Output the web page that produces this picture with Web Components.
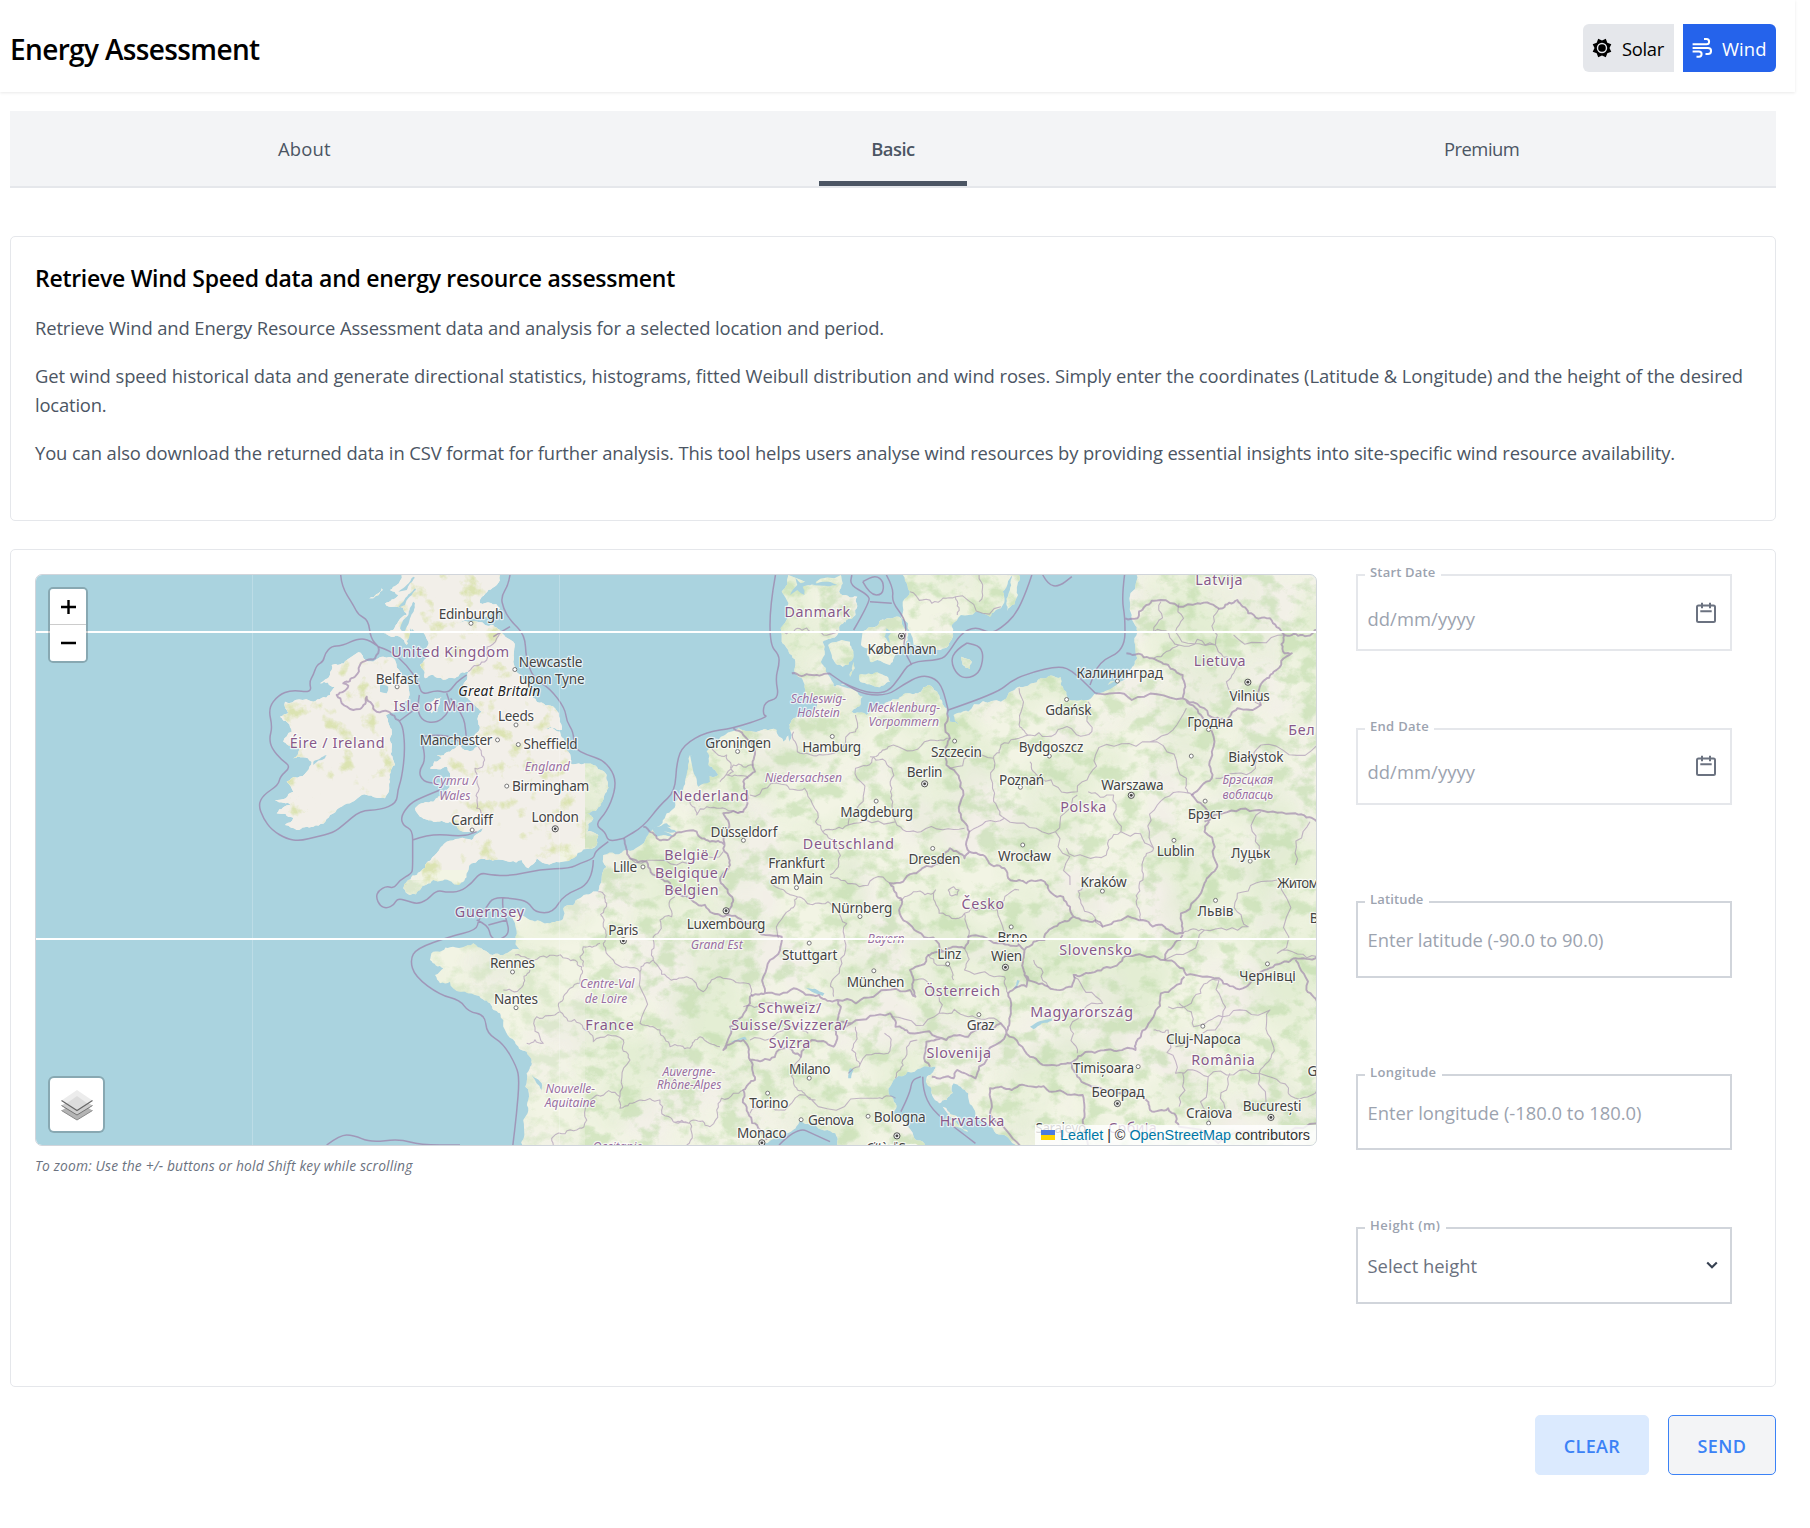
<!DOCTYPE html>
<html lang="en">
<head>
<meta charset="utf-8">
<title>Energy Assessment</title>
<style>
html,body{margin:0;background:#fff}
body{font-family:"Open Sans","Noto Sans",sans-serif;font-size:18.4px;line-height:28.8px;color:#000;height:1528px;overflow:hidden}
</style>
</head>
<body>
<energy-app></energy-app>
<script>
const make = (name, html, setup) => customElements.define(name, class extends HTMLElement {
  connectedCallback() {
    if (this.shadowRoot) return;
    this.attachShadow({ mode: 'open' }).innerHTML = html;
    if (setup) setup.call(this, this.shadowRoot);
  }
});

make('energy-app', `
<style>
:host{display:block;width:1810px}
main{display:flex;flex-direction:column;padding:19px 34px 0 10px}
.intro{margin-top:48px}
.work{margin-top:28px}
.intro h2{margin:0;font-size:23px;line-height:34px;font-weight:600}
.intro p{margin:0 0 19.2px;color:#4b5563;white-space:nowrap}
.intro h2 + p{margin-top:19px}
.cols{display:grid;grid-template-columns:1282px 376px;column-gap:39px}
.hint{display:block;font-size:13.8px;line-height:20px;font-style:italic;color:#6b7280;margin-top:9.5px}
.fields{display:flex;flex-direction:column}
.fields > :nth-child(2){margin-top:77px}
.fields > :nth-child(3){margin-top:96px}
.fields > :nth-child(4){margin-top:96px}
.fields > :nth-child(5){margin-top:77px}
.actions{display:flex;justify-content:flex-end;gap:19px;margin-top:28px}
</style>
<app-header></app-header>
<main>
  <tab-bar></tab-bar>
  <panel-card class="intro" style="--card-h:285px">
    <h2><fit-line w="640">Retrieve Wind Speed data and energy resource assessment</fit-line></h2>
    <p><fit-line w="849">Retrieve Wind and Energy Resource Assessment data and analysis for a selected location and period.</fit-line></p>
    <p><fit-line w="1708">Get wind speed historical data and generate directional statistics, histograms, fitted Weibull distribution and wind roses. Simply enter the coordinates (Latitude &amp; Longitude) and the height of the desired</fit-line><br><fit-line w="71.5">location.</fit-line></p>
    <p><fit-line w="1640">You can also download the returned data in CSV format for further analysis. This tool helps users analyse wind resources by providing essential insights into site-specific wind resource availability.</fit-line></p>
  </panel-card>
  <panel-card class="work" style="--card-h:838px">
    <div class="cols">
      <div><map-view></map-view><span class="hint"><fit-line w="377.5">To zoom: Use the +/- buttons or hold Shift key while scrolling</fit-line></span></div>
      <div class="fields">
        <form-field kind="date" style="--line:#e5e7eb;--drop:15px;--lift:2px"><fit-line slot="label" w="65.5">Start Date</fit-line><fit-line w="107.5">dd/mm/yyyy</fit-line></form-field>
        <form-field kind="date" style="--line:#e5e7eb;--drop:12px"><fit-line slot="label" w="59">End Date</fit-line><fit-line w="107.5">dd/mm/yyyy</fit-line></form-field>
        <form-field style="--drop:2px"><fit-line slot="label" w="53.5">Latitude</fit-line><fit-line w="236">Enter latitude (-90.0 to 90.0)</fit-line></form-field>
        <form-field style="--field-h:76px;--drop:2px"><fit-line slot="label" w="66.5">Longitude</fit-line><fit-line w="274">Enter longitude (-180.0 to 180.0)</fit-line></form-field>
        <form-field kind="select" style="--ink:#6b7280;--drop:2px"><fit-line slot="label" w="70.5">Height (m)</fit-line><fit-line w="109.5">Select height</fit-line></form-field>
      </div>
    </div>
  </panel-card>
  <div class="actions">
    <action-button style="--w:114px;--bg:#dbeafe;--bd:#dbeafe"><fit-line w="56.5">CLEAR</fit-line></action-button>
    <action-button style="--w:108px;--bg:#f3f4f6;--bd:#3b82f6"><fit-line w="49">SEND</fit-line></action-button>
  </div>
</main>`);

make('app-header', `
<style>
:host{display:flex;box-sizing:border-box;width:1795px;height:92px;padding:4px 19px 0 10px;justify-content:space-between;align-items:center;box-shadow:0 1px 3px rgba(0,0,0,.09)}
h1{margin:0;padding-top:1px;font-size:28px;line-height:40px;font-weight:600}
.modes{display:flex;gap:9px}
</style>
<h1><fit-line w="249.5">Energy Assessment</fit-line></h1>
<div class="modes">
<mode-button style="--w:91px;--bg:#e5e7eb;--fg:#000;--r:6px 0 0 6px">
<svg slot="icon" width="20" height="20" viewBox="0 0 20 20"><path fill="currentColor" fill-rule="evenodd" d="M6.200.7 10 2.500 13.800.7 15.300 4.700 19.300 6.200 17.500 10 19.300 13.800 15.300 15.300 13.800 19.300 10 17.500 6.200 19.300 4.700 15.300.7 13.800 2.500 10 .7 6.200 4.700 4.700ZM10 4.800a5.200 5.200 0 1 0 0 10.400 5.200 5.200 0 0 0 0-10.400Z"/><circle cx="10" cy="10" r="3.800" fill="currentColor"/></svg>
<fit-line w="42">Solar</fit-line></mode-button>
<mode-button style="--w:93px;--bg:#2563eb;--fg:#fff;--r:0 6px 6px 0">
<svg slot="icon" width="20" height="20" viewBox="0 0 20 20" fill="none" stroke="currentColor" stroke-width="2"><path d="M.6 6.300H14.500a2.600 2.600 0 0 0 0-5.200H12M.6 9.900H16a3 3 0 0 1 0 6.100H13.500M.6 13.500H7a2.600 2.600 0 0 1 0 5.200H4.500"/></svg>
<fit-line w="44.5">Wind</fit-line></mode-button>
</div>`);

make('mode-button', `
<style>
:host{display:flex;box-sizing:border-box;width:var(--w);height:48px;padding:0 0 0 9px;align-items:center;gap:10px;background:var(--bg);color:var(--fg);border-radius:var(--r)}
span{padding-top:3px}
slot[name=icon]{display:flex}
</style><slot name="icon"></slot><span><slot></slot></span>`);

make('tab-bar', `
<style>
:host{display:flex;box-sizing:border-box;height:77px;background:#f3f4f6;border-bottom:2px solid #e5e7eb;color:#4b5563}
div{flex:1;display:flex;justify-content:center;align-items:stretch}
span{display:flex;box-sizing:border-box;justify-content:center;width:148px;padding-top:24px;height:75px}
.on span{border-bottom:5px solid #4b5563;font-weight:600}
</style>
<div><span><fit-line w="52.5">About</fit-line></span></div>
<div class="on"><span><fit-line w="43.5">Basic</fit-line></span></div>
<div><span><fit-line w="75.5">Premium</fit-line></span></div>`);

make('panel-card', `
<style>:host{display:block;box-sizing:border-box;height:var(--card-h);padding:24px;border:1px solid #e5e7eb;border-radius:5px}</style><slot></slot>`);

make('form-field', `
<style>
:host{display:block;box-sizing:border-box;height:var(--field-h,77px)}
fieldset{box-sizing:border-box;height:calc(100% + 8px);margin:-8px 0 0;padding:0 12px 0 9.5px;border:2px solid var(--line,#d1d5db);min-width:0}
legend{padding:0 5px;margin-left:-2.5px;font-size:13px;line-height:12px;height:18px;font-weight:600;color:#9ca3af}
.row{display:flex;justify-content:space-between;height:56px;align-items:center;color:var(--ink,#9ca3af)}
.val{padding-top:var(--drop)}
.ico{display:flex;padding-top:var(--lift,0px)}
</style>
<fieldset><legend><slot name="label"></slot></legend><div class="row"><span class="val"><slot></slot></span><span class="ico"></span></div></fieldset>`,
function (root) {
  const kind = this.getAttribute('kind'), ico = root.querySelector('.ico');
  if (kind === 'date') ico.innerHTML = '<svg width="23" height="22" viewBox="0 0 23 22" fill="none" stroke="#6b7280" stroke-width="2"><rect x="2" y="3.5" width="18" height="16.500" rx="1.5"/><path d="M7 .8v5.4M15 .8v5.4M5.3 9.2h11.4"/></svg>';
  if (kind === 'select') ico.innerHTML = '<svg width="12" height="10" viewBox="0 0 12 10" fill="none" stroke="#374151" stroke-width="2.1"><path d="M1.2 2.4 6 7.2 10.8 2.4"/></svg>';
});

make('action-button', `
<style>:host{display:flex;box-sizing:border-box;justify-content:center;align-items:center;width:var(--w);height:60px;padding-top:3px;background:var(--bg);border:1px solid var(--bd);border-radius:5px;color:#3b82f6;font-weight:600;font-size:18px}</style><slot></slot>`);

/* Sheets: origin x, origin y, units per pixel in x and y. */
const SHEETS = { A:[30,565,3,3], B:[400,565,3,3], C:[750,565,2.75,3], D:[30,860,3,3], E:[400,860,3,3], F:[750,860,2.75,3] };
function pts(text) {
  let s = SHEETS.A; const out = [];
  for (const t of text.trim().split(/\s+/)) {
    if (SHEETS[t]) { s = SHEETS[t]; continue; }
    const [x, y] = t.split(',').map(Number);
    out.push([s[0] + x / s[2], s[1] + y / s[3]]);
  }
  return out;
}
let seed = 7;
const rnd = () => (seed = (seed * 16807) % 2147483647) / 2147483647 - .5;
function rough(p, amp) {
  for (let k = 0; k < 3; k++) {
    const o = [p[0]];
    for (let i = 1; i < p.length; i++) {
      const [a, b] = p[i - 1], [c, d] = p[i], l = Math.hypot(c - a, d - b);
      if (l > 3.5 && l < 130) { const j = rnd() * amp * l; o.push([(a + c) / 2 - (d - b) / l * j, (b + d) / 2 + (c - a) / l * j]); }
      o.push(p[i]);
    }
    p = o;
  }
  return p;
}
const line = p => 'M' + p.map(q => q[0].toFixed(1) + ' ' + q[1].toFixed(1)).join('L');
function smooth(p) {
  let d = 'M' + p[0];
  for (let i = 1; i < p.length - 1; i++) d += 'Q' + p[i] + ' ' + (p[i][0] + p[i + 1][0]) / 2 + ' ' + (p[i][1] + p[i + 1][1]) / 2;
  return d + 'L' + p[p.length - 1];
}
const LAND = [
'A 985,262 1000,280 1030,290 1060,275 1095,285 1115,330 1135,360 1135,400 1100,440 1068,450 1085,500 1085,560 1095,600 1080,650 1065,700 1010,690 960,715 900,750 850,785 800,795 765,780 790,758 740,745 785,722 735,705 790,680 770,650 830,620 845,590 790,580 810,550 760,530 785,500 750,455 775,445 765,410 850,410 900,390 915,365 870,355 900,330 905,300 950,285',
'A 1115,30 1100,60 1080,75 1105,90 1065,115 1090,125 1120,130 1130,150 1090,195 1060,205 1085,215 1110,215 1130,240 1145,190 1170,200 1195,230 1195,270 1170,300 1185,340 B 100,330 130,345 165,340 205,320 195,350 190,385 225,420 245,440 235,470 235,500 210,520 235,545 200,555 180,540 150,560 110,570 125,580 90,610 140,605 150,625 150,660 140,690 100,710 45,730 60,755 100,770 150,770 190,800 225,800 250,790 215,825 140,830 110,865 60,920 20,950 E 10,85 30,105 60,90 100,60 155,65 175,75 200,40 215,10 B 260,885 330,890 365,885 385,910 410,880 490,890 520,880 590,840 595,810 560,800 580,760 545,745 590,735 620,680 620,630 580,600 510,595 505,560 480,500 430,490 485,495 465,430 410,410 380,350 340,290 340,230 300,195 255,180 175,175 240,160 300,130 240,115 245,95 290,60 300,30',
'E 365,870 370,780 385,720 380,640 395,600 380,575 345,545 310,480 300,460 270,430 225,405 150,365 120,370 105,345 130,325 90,300 100,275 150,262 220,250 250,270 310,285 360,270 345,190 320,150 375,170 390,180 450,190 490,175 490,145 540,115 595,95 605,60 B 605,940 610,870 680,855 740,815 760,790 800,745 835,700 855,650 870,570 885,575 890,620 910,640 955,630 945,615 925,600 920,560 935,540 975,510 1060,500 1130,495 1150,530 1170,500 1180,460 1230,450 1255,400 1215,380 1190,330 1175,270 1145,230 1145,80 1165,30 C 250,30 245,80 295,95 290,150 245,185 240,210 200,230 195,290 215,330 230,365 270,360 310,395 280,440 320,450 380,410 430,385 470,380 490,360 520,390 540,430 550,470 575,480 560,450 600,440 690,410 740,365 800,340 855,337 870,380 880,405 930,405 970,380 1040,320 1065,280 1065,200 1050,150 1060,20 1600,20 F 1600,870 745,870 700,825 650,790 620,760 600,700 580,680 560,670 540,720 520,730 500,690 485,655 510,620 470,625 400,655 385,680 400,730 395,760 450,830 490,870 F 250,870 235,820 180,790 140,780 100,820 40,850 30,870',
'C 310,200 345,185 380,160 410,155 435,210 410,260 385,300 350,285 330,290 325,250 305,240','C 215,240 245,228 275,230 285,270 270,300 240,300 225,270','C 300,330 350,322 385,350 345,365 300,345','C 285,290 288,310 275,335 280,310',
'C 405,20 440,80 420,110 440,200 450,240 520,255 550,230 555,180 580,150 660,155 690,130 695,80 730,20','C 740,30 737,90 708,138 710,90 720,30','C 580,275 610,290 605,312 585,300','A 1195,420 1215,400 1235,395 1225,425 1205,445','A 1018,100 1055,70 1058,75 1030,100','F 535,770 580,800 600,815 560,795','F 530,740 560,765 590,780 550,770'
];
const SEA = ['B 870,570 905,565 925,600 930,650 895,665 880,620','F 395,870 395,850 420,860','E 385,630 425,670 425,700 405,660','F 770,500 830,475 830,482 780,508','F 150,380 205,400 200,408 170,395','E 985,545 1035,530 1040,540 1000,545','F 270,655 275,625 285,630 278,655','F 725,385 735,360 742,362 735,385','C 855,337 870,340 885,390 870,380',
'B 0,190 25,150 40,110 45,115 30,160 10,205','B -10,130 10,110 45,70 48,74 15,120','B -5,80 20,60 40,35 45,38 20,75','B 20,230 30,190 38,200 32,240','B 755,790 800,775 820,790 800,785 830,800 790,800 825,815 770,815','C 110,90 130,60 125,40 140,55 180,50 185,60 145,65 150,90 130,75','C 170,60 200,50 240,60 200,62','C 250,180 260,170 275,185 260,200','C 240,360 280,350 300,385 270,370','C 390,200 375,190 370,215 385,240 380,215','A 1050,360 1075,365 1070,385 1050,380','A 850,590 890,570 885,580 850,600','C 940,370 1000,350 1040,300 1035,340 960,385','C 100,480 115,510 108,530'];
const COASTAL = [
'A 1045,245 1020,225 985,220 935,243 905,243 885,265 880,290 860,300 850,330 838,350 845,383 785,375 745,390 715,430 727,485 718,520 725,550 755,585 783,605 750,635 745,660 700,690 685,720 700,760 725,795 770,822 810,828 860,815 910,803 940,780 990,737 1050,735 1100,715 1103,675 1115,640 1125,560 1120,490 1108,468',
'A 932,30 935,65 970,120 985,150 1015,165 1022,220 1045,245','A 1045,245 1080,255 1130,300 1165,350 1175,390 1220,375 1255,385 1280,350 1310,330','A 1168,390 1160,435 1180,470 1220,473 1250,450 1262,420 1250,385','A 1108,468 1165,425','A 1262,400 1300,450 1308,500 1310,540','A 1175,515 1240,505 1300,535','A 1175,530 1190,580 1165,620 1180,650 1215,655','A 1230,675 1180,695 1140,715 1112,755 1120,782 1148,795 1148,850 1148,910 D 1145,40 1110,60 1092,85 1070,78 1045,92 1038,112 1050,138 1070,145 1092,135 1102,115 1130,122 E 50,132 80,122 110,90 140,97 180,95 215,70 240,38 270,45 330,48 420,28 510,25 540,10 B 582,880 585,860 625,830','A 1148,825 1200,805 1300,815 1340,800',
'B 330,30 325,60 303,95 310,130 330,165 375,210 378,280 400,340 450,370 495,430 500,470 520,500 523,550 560,570 610,585 645,630 645,680 620,740 585,780 615,800 625,830 672,820','B 280,215 330,185',
'E 580,0 578,70 490,105 460,158 405,158 385,125 340,115 280,112 260,140 B 235,1065 E 230,210 150,230 50,265 30,300 45,350 120,405 180,420 205,455 255,465 260,520 310,550 350,620 358,660 350,760 338,860','E 230,180 265,195 272,235 300,240 328,220 320,180 308,150 308,112','E 265,195 320,180','D 890,855 930,825 970,825 1020,847 1110,837 1170,855 1290,855',
'C 775,30 760,80 730,150 690,190 660,205 620,185 580,205 545,265 525,285 440,290 410,340 380,380 340,385 300,375 250,350','C 285,195 330,110 325,90 275,60 280,30','C 310,50 330,90 365,90 368,50 345,30 310,50','C 375,30 395,70 390,110 425,160 430,200 420,250 445,300','C 330,110 390,115','C 597,234 565,255 552,290 570,330 597,341 630,325 642,280 635,245 597,234','C 1030,30 1022,100 1032,160 1030,255 960,290 935,360','C 545,435 680,385 720,345 780,320 840,305 880,310 950,385','C 805,30 820,60 850,65 885,35','C 225,330 270,365 320,390 380,390 420,360 470,330 510,340 530,370 545,435','C 70,30 55,120 55,240 80,270 80,300 70,340 80,400 40,410 35,450 B 1105,455 1000,490 920,500 850,540 830,590 825,680 780,720 730,785 670,820','F 415,755 440,700 445,660 470,650','F 475,650 475,690 500,750 560,800 620,850','F 80,855 130,800 180,825 220,845'];
const BORDERS = [
'A 1045,245 1035,280 990,300 975,335 940,355 955,362 920,390 935,415 970,435 990,432 1010,395 1040,440 1075,440 1108,468',
'B 1000,490 1030,510 1065,560 1065,620 1030,650 1045,700 1030,740 970,745 985,790 970,850 990,900 E 960,60 1000,120 985,165','B 730,785 770,820 810,820 850,800 890,800 930,830 975,840','B 672,820 690,880 740,890 780,940 E 830,95 880,125 940,160 985,165 1060,195 1145,230 1110,300 1095,400 1050,410 1050,430 990,500 970,570 1030,540 1050,600 1110,600 1130,575 F 100,560 140,590 170,540 230,560 235,510 280,490',
'F 40,400 120,385 190,405 240,420 340,410 440,390 455,410 450,360 440,330 490,285 530,275 460,215 410,150 415,115 385,70 450,40 500,20 C 550,850 590,880 603,860','F 240,420 250,440 240,490 280,490 385,460 400,500 440,520 540,540 600,530 690,490 705,520',
'C 545,435 550,520 540,600 575,640 575,740 603,800 603,860 650,880 700,910 710,940 F 740,60 760,70 800,60 830,100 880,140 890,170 950,180 970,200 1000,185 1080,180 1140,200 1190,220 1185,160 1250,70 1285,20 C 1285,900 1250,800 1260,740 1215,690 1270,640 1270,560 1240,450 1190,400 1050,405 950,385',
'F 530,275 590,265 600,230 680,250 740,255 755,270 780,245 810,240 850,190 890,170','C 1190,400 1190,330 1150,300 1100,280 1035,265','C 1032,160 1065,160 1085,125 1130,105 1230,115 1300,130 1340,105 1370,145 1430,160 1470,210 1470,265 1490,265 1440,320 1410,350 1405,420 1340,430 1310,470 1260,450 1190,400','C 1470,210 1520,210 1565,190','C 1250,770 1300,745 1400,735 1500,745 1560,770',
'F 755,270 750,300 755,345 820,380 885,380 890,345 930,340 1000,320 1060,285 1140,300 1150,270 1190,225','F 1140,300 1200,345 1290,355 1355,385 1400,340 1460,310 1500,295 1560,290','F 1500,300 1530,390 1560,440','F 1195,350 1130,400 1110,470 1075,530 1060,570 1000,572 930,575 880,610 830,615 770,590 705,520 715,470 710,400 760,380 755,345','F 705,520 630,620 620,655 570,630 560,655 500,650','F 540,540 485,545 495,620','F 745,860 660,760 660,685 720,690 780,680 830,695 915,705 915,780 930,860','F 885,610 900,650 940,680 1020,700 1080,710 1100,750 1150,745 1180,800 1400,815 1560,790','E 1050,600 1065,660 1030,690 1045,760 1080,810 1100,840','C 115,325 170,330 225,330'];
const REGIONS = [
'E 595,95 620,130 610,200 610,250 640,300 720,335 760,300 760,240 780,180 815,170 825,110','E 550,320 550,260 600,250','E 345,285 420,290 500,295 545,320 540,370 490,410 480,455 410,470 430,550 380,550','E 720,335 720,490 780,510 810,560 870,565 900,530 960,560','E 760,300 800,350 860,350 910,395 960,350 1040,370 1060,410','E 480,455 540,490 580,545 670,540 690,600 660,710 660,745 720,720 780,720 820,785 870,790 860,855','E 590,705 560,780 530,810 460,830 460,855','E 820,785 880,780 930,800 950,750 1000,700 1030,690','E 310,390 370,375 390,330','E 590,705 660,710',
'C 0,690 100,660 150,670 180,770 200,800 270,780 300,720 290,610 340,575 380,545 480,530 550,520','C 270,780 400,770 470,800 590,790','C 400,770 390,690 390,610 330,575','C 200,800 240,850 220,930','F 80,240 110,150 130,110 60,60','F 260,240 240,150 180,130 130,110','C 120,500 130,560 200,570 290,500 290,450','F 230,410 235,350 260,240','F 220,50 300,80 385,70','C 740,370 740,480 770,510 860,490 940,500 930,410','C 550,610 670,580 690,540 770,510','C 770,590 800,640 900,680 950,570 1100,530 1200,430','C 930,680 1000,690 1020,800 1110,850 1120,720 1220,690','C 670,580 670,700 700,760 840,800 900,690','C 603,800 700,760','C 840,800 880,960','C 1020,800 980,870 870,850','C 1100,530 1200,640 1215,690','C 1110,850 1080,890 1070,960','F 1070,75 1065,140 1075,180','F 970,200 910,130 920,60','C 440,80 500,115 565,95 690,125','C 565,95 570,150','C 630,110 630,30','C 90,200 130,190 180,200 240,195','B 205,320 260,285 290,220 310,200','B 235,545 250,600 225,610 235,680 230,730 260,770','B 930,540 980,570 1000,620 980,630 1045,640','B 870,710 890,750 960,730 1030,740','B 960,650 1000,600 1060,600','B 690,880 830,900 970,860','F 1110,510 1150,510 1170,640 1260,650 1400,640 1480,700','F 1150,440 1240,400 1290,360','F 1170,560 1300,470 1430,450 1440,560 1400,640','F 1180,740 1190,640','F 1320,640 1310,760','F 1260,650 1260,800','F 1400,640 1400,750','F 1180,430 1220,500 1300,470 1290,360','F 890,350 970,430 880,500 900,580','F 780,300 820,380','F 1140,300 1250,210 1370,200 1340,100 1450,60','F 1190,220 1250,210','F 1460,60 1450,280 1560,290','F 1480,700 1560,690','C 1130,110 1110,200 1180,240 1280,240 1290,130','C 1330,210 1470,210','C 1180,115 1170,200 1280,240 1340,290 1310,350 1405,420','C 1180,240 1110,280','C 1405,540 1560,540','C 1405,540 1390,610 1280,640','C 1405,740 1400,860','C 1540,770 1500,900','F 410,120 450,95 510,90 520,160 590,160 600,230','F 590,160 680,150 740,90','F 680,150 740,255','F 545,90 560,80 575,90 570,105 550,105 545,90','F 490,285 550,320 560,360','F 590,265 590,330 700,350 710,400','F 390,470 520,460 490,370 450,360','F 520,460 600,470 690,490','F 140,590 120,670 150,700 170,720 350,715 400,715','F 0,760 80,750 180,720','F 270,640 300,620 380,580 370,520','F 400,655 420,600 460,540','F 300,620 280,570 290,500','E 1030,440 1120,430 1260,430','F 0,540 100,500 160,520'];
/* text, x, y, width; the leading key picks the style: t town, c country, r region, i island */
const LABELS = `t|Edinburgh|408|532|56;c|United Kingdom|390|565|102;t|Newcastle|477|574|55;t|upon Tyne|478|588|57;t|Belfast|344|588|37;i|Great Britain|432.5|598.5|71;c|Isle of Man|376|612|70;t|Leeds|447|620|31;t|Manchester|395|641|63;t|Sheffield|477|645|47;c|Éire / Ireland|292|644|82;r|England|474|664|39;r|Cymru /|394|676|38;r|Wales|394|689|27;t|Birmingham|477|681|67;t|Cardiff|409|710.5|36;t|London|481|708|41;c|Guernsey|424|790.5|60;t|Rennes|444|834|39;t|Nantes|447|865.5|38;r|Centre-Val|526|852.5|47;r|de Loire|525|865|37;c|France|528|888|42;r|Nouvelle-|494|943|43;r|Aquitaine|494|955.5|44;r|Auvergne-|597|928|46;r|Rhône-Alpes|597|940|56;r|Occitanie|535|993.5|43;t|Paris|540|806|26;t|Lille|541.5|751|21;c|België /|599|740.5|47;c|Belgique /|599|756|63;c|Belgien|599|771.5|47;t|Luxembourg|629|800.5|68;r|Grand Est|621|818|45;c|Nederland|615.5|690|66;t|Groningen|639.5|643.5|57;t|Düsseldorf|644.5|720.5|58;t|Frankfurt|690|748|49;t|am Main|690|762|46;c|Deutschland|735|731|79;t|Hamburg|720.5|647.5|51;r|Niedersachsen|696|673.5|67;r|Schleswig-|709|605|48;r|Holstein|709|617.5|37;r|Mecklenburg-|783|613|63;r|Vorpommern|783|625.5|61;c|Danmark|708|530|57;t|København|781.5|562|60;t|Szczecin|828.5|652|44;t|Berlin|801|669|31;t|Magdeburg|759.5|703.5|63;t|Dresden|809.5|744.5|45;t|Nürnberg|746.5|786.5|53;t|Stuttgart|701.5|827.5|48;t|München|758.5|850.5|50;r|Bayern|767.5|813.5|32;t|Linz|822.5|827|21;t|Wien|872|828.5|27;t|Brno|877|812|26;c|Česko|851.5|783.5|37;c|Österreich|833.5|858.5|66;t|Graz|849.5|888|24;c|Schweiz/|684|873|55;c|Suisse/Svizzera/|684|888|101;c|Svizra|684|904|36;t|Milano|701.5|926|36;t|Torino|666|955.5|34;t|Genova|720|970|40;t|Bologna|779.5|967.5|45;t|Monaco|660|981.5|43;c|Slovenija|830.5|912.5|56;c|Hrvatska|842|971|56;c|Magyarország|937|876.5|89;c|Slovensko|949|823|63;t|Kraków|956|764.5|40;t|Wrocław|887.5|741.5|46;c|Polska|938.5|699|40;t|Warszawa|981|680.5|54;t|Poznań|885|675.5|39;t|Bydgoszcz|910.5|647.5|56;t|Gdańsk|925.5|615.5|40;t|Калининград|970|583.5|75;c|Lietuva|1056.5|573|45;t|Vilnius|1082.5|603|35;t|Гродна|1048.5|625.5|40;t|Białystok|1088|656|48;c|Бел|1127.5|632.5|23;r|Брэсцкая|1081|675.5|44;r|вобласць|1081|688.5|44;t|Брэст|1044|705|30;t|Lublin|1018.5|737.5|33;t|Луцьк|1083.5|739.5|34;t|Львів|1053|789.5|31;t|Житом|1124.5|765.5|36;t|Чернівці|1098|845.5|49;t|Cluj-Napoca|1042.5|900.5|65;c|România|1059.5|918.5|55;t|Timișoara|956|925|53;t|Београд|968.5|946|46;t|Craiova|1047.5|964.5|40;t|București|1102|958.5|51;c|Latvija|1056|502.5|41;t|Sarajevo|919|977|44;c|Србија|981|977.5|42;t|Città di San|773|995|45;t|G|1137|928|7;t|В|1138.5|795|7`;
const DOTS = '408,540 446,580 344,595 447,628 431,641 449,645 439,681 409,719 444,842 447,873 557,751 639,651 644,728 690,769 721,638 827,642 759,694 808,735 745,794 701,817 757,841 821,835 876,803 848,879 701,934 665,947 694,970 752,967 955,772 886,732 884,682 909,655 924,606 968,590 1047,632 1032,655 1044,694 1017,728 1083,746 1053,780 1098,835 1042,889 986,924 1047,973';
const CAPITALS = '481,718 540,815 629,789 781,551 801,679 871,838 660,990 777,984 980,689 1081,591 968,956 1101,968';

make('map-canvas', `
<style>
:host{display:block}
svg{display:block}
text{font-family:"Noto Sans","Open Sans",sans-serif;text-anchor:middle;paint-order:stroke;stroke:rgba(255,255,255,.7);stroke-width:2.4px;stroke-linejoin:round}
.t{font-size:13.6px;fill:#444}
.c{font-size:14.3px;fill:#87598a}
.r{font-size:12.2px;fill:#9a70a2;font-style:italic}
.i{font-size:13.8px;fill:#222;font-style:italic}
</style>
<svg width="1280" height="570" viewBox="36 575 1280 570">
<defs>
<clipPath id="land"><path class="landpath"/></clipPath>
<filter id="woods" x="0" y="0" width="100%" height="100%" color-interpolation-filters="sRGB"><feTurbulence type="fractalNoise" baseFrequency=".05 .06" numOctaves="6" seed="11"/><feColorMatrix values="0 0 0 0 .74  0 0 0 0 .86  0 0 0 0 .66  4.5 0 0 0 -2.1"/></filter>
<filter id="tint" x="0" y="0" width="100%" height="100%" color-interpolation-filters="sRGB"><feTurbulence type="fractalNoise" baseFrequency=".012" numOctaves="3" seed="31"/><feColorMatrix values="0 0 0 0 .84  0 0 0 0 .91  0 0 0 0 .77  0 3 0 0 -1.2"/></filter>
<filter id="fields" x="0" y="0" width="100%" height="100%" color-interpolation-filters="sRGB"><feTurbulence type="fractalNoise" baseFrequency=".014" numOctaves="3" seed="4"/><feColorMatrix values="0 0 0 0 .95  0 0 0 0 .935  0 0 0 0 .915  0 5 0 0 -2.2"/></filter>
<filter id="heath" x="0" y="0" width="100%" height="100%" color-interpolation-filters="sRGB"><feTurbulence type="fractalNoise" baseFrequency=".05" numOctaves="5" seed="23"/><feColorMatrix values="0 0 0 0 .86  0 0 0 0 .89  0 0 0 0 .7  5 0 0 0 -2.9"/></filter>
</defs>
<rect x="36" y="575" width="1280" height="570" fill="#aad3df"/>
<path class="landpath" fill="#f2f4e4"/>
<g clip-path="url(#land)">
<rect x="36" y="575" width="1280" height="570" filter="url(#fields)" opacity=".7"/>
<path d="M36 575H585V830L560 850V870H36Z" fill="#f2efe9"/>
<rect x="36" y="575" width="550" height="310" filter="url(#heath)"/>
<rect x="585" y="575" width="731" height="570" filter="url(#tint)" opacity=".5"/>
<rect x="400" y="880" width="185" height="265" filter="url(#tint)" opacity=".3"/>
<rect x="585" y="575" width="731" height="570" filter="url(#woods)" opacity=".55"/>
<rect x="400" y="880" width="185" height="265" filter="url(#woods)" opacity=".35"/>
</g>
<path class="sea" fill="#aad3df"/>
<g fill="none" stroke="#9c83ab" stroke-linejoin="round">
<path class="regions" stroke-width="1.1" opacity=".55"/>
<path class="borders" stroke-width="1.9" opacity=".65"/>
<path class="coastal" stroke-width="1.5" opacity=".75"/>
</g>
<path d="M252.5 575V1145M559.5 575V1145" stroke="#fff" stroke-opacity=".22"/>
<g class="names"></g>
<path d="M36 632H1316M36 939H1316" stroke="#fff" stroke-width="2"/>
</svg>`,
function (root) {
  const land = LAND.map(s => line(rough(pts(s), .36)) + 'Z').join('');
  root.querySelectorAll('.landpath').forEach(p => p.setAttribute('d', land));
  const set = (c, d) => root.querySelector(c).setAttribute('d', d);
  set('.sea', SEA.map(s => line(rough(pts(s), .2)) + 'Z').join(''));
  set('.regions', REGIONS.map(s => line(rough(pts(s), .45))).join(''));
  set('.borders', BORDERS.map(s => line(rough(pts(s), .35))).join(''));
  set('.coastal', COASTAL.map(s => smooth(pts(s))).join(''));
  const K = 1.15434;
  let out = '';
  for (const d of DOTS.split(' ')) { const [x, y] = d.split(','); out += `<circle cx="${x * K}" cy="${y * K}" r="2" fill="#fff" stroke="#777" stroke-width="1"/>`; }
  for (const d of CAPITALS.split(' ')) { const [x, y] = d.split(','); out += `<circle cx="${x * K}" cy="${y * K}" r="3.1" fill="#eee" stroke="#555" stroke-width="1"/><circle cx="${x * K}" cy="${y * K}" r="1.4" fill="#444"/>`; }
  for (const l of LABELS.split(';')) {
    const [k, t, x, y, w] = l.split('|');
    out += `<text class="${k}" x="${(x * K).toFixed(1)}" y="${(y * K + (k === 'r' ? 4.3 : 4.8)).toFixed(1)}" textLength="${(w * K).toFixed(1)}">${t}</text>`;
  }
  root.querySelector('.names').innerHTML = out;
});

make('map-view', `
<style>
:host{display:block;position:relative;box-sizing:border-box;width:1282px;height:572px;border:1px solid #d1d5db;border-radius:7px;overflow:hidden}
.zoom{position:absolute;left:12px;top:12px;border:2px solid rgba(0,0,0,.2);border-radius:5px;background-clip:padding-box}
.zoom div{width:36px;height:36px;background:#fff;display:flex;align-items:center;justify-content:center}
.zoom div:first-child{border-bottom:1px solid #ccc;border-radius:3px 3px 0 0;height:35px}
.zoom div:last-child{border-radius:0 0 3px 3px}
.layers{position:absolute;left:12px;top:501px;width:53px;height:53px;border:2px solid rgba(0,0,0,.2);border-radius:6px;background:#fff;background-clip:padding-box;display:flex;align-items:center;justify-content:center}
.credit{position:absolute;right:0;bottom:0;display:flex;align-items:center;height:20px;padding:0 6px;background:rgba(255,255,255,.8);font:14.4px/20px "Liberation Sans",Arial,sans-serif;color:#333;white-space:pre}
.credit svg{margin-right:5px}
b{font-weight:400;color:#0078a8}
</style>
<map-canvas></map-canvas>
<div class="zoom"><div><svg width="16" height="16" viewBox="0 0 16 16"><path d="M8.500 1v14M1 8h15" stroke="#000" stroke-width="2.4"/></svg></div><div><svg width="16" height="16" viewBox="0 0 16 16"><path d="M1 8h15" stroke="#000" stroke-width="2.4"/></svg></div></div>
<div class="layers"><svg width="32" height="32" viewBox="0 0 32 32"><path d="M.5 21.500 16 12 31.500 21.500 16 31Z" fill="#b4b4b4"/><path d="M.5 21.500 16 31 31.500 21.500" fill="none" stroke="#888"/><path d="M.5 16.500 16 7 31.500 16.500 16 26Z" fill="#cdcdcd"/><path d="M.5 16.500 16 26 31.500 16.500" fill="none" stroke="#747474"/><path d="M.5 11.500 16 1 31.500 11.500 16 21.500Z" fill="#ececec"/><path d="M5.500 14.500 16 7 26.500 14.500 16 21Z" fill="#dcdcdc"/><path d="M.5 11.500 16 21.500 31.500 11.500" fill="none" stroke="#666" stroke-width="1.200"/></svg></div>
<div class="credit"><svg width="14" height="10" viewBox="0 0 14 10"><path fill="#4c7be1" d="M0 0h14v5H0z"/><path fill="#ffd500" d="M0 5h14v5H0z"/></svg><fit-line w="250"><b>Leaflet</b> | © <b>OpenStreetMap</b> contributors</fit-line></div>`);

/* Tracks a single line of text to a given measure. */
make('fit-line', '<style>:host{display:inline-block;white-space:pre;overflow:visible}</style><slot></slot>', function () {
  const w = +this.getAttribute('w'), n = this.textContent.length;
  const natural = this.getBoundingClientRect().width;
  this.style.letterSpacing = ((w - natural) / n).toFixed(4) + 'px';
});
</script>
</body>
</html>
